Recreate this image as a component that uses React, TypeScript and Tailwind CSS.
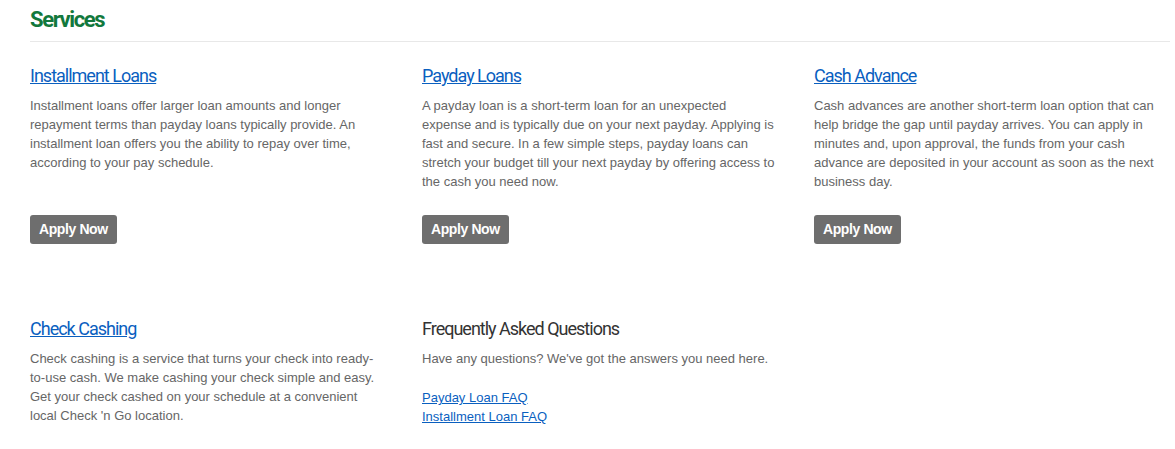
const headFont = { fontFamily: 'Roboto, "DejaVu Sans", sans-serif' };

type Service = { title: string; text: string };

const services: Service[] = [
  {
    title: 'Installment Loans',
    text: 'Installment loans offer larger loan amounts and longer repayment terms than payday loans typically provide. An installment loan offers you the ability to repay over time, according to your pay schedule.',
  },
  {
    title: 'Payday Loans',
    text: 'A payday loan is a short-term loan for an unexpected expense and is typically due on your next payday. Applying is fast and secure. In a few simple steps, payday loans can stretch your budget till your next payday by offering access to the cash you need now.',
  },
  {
    title: 'Cash Advance',
    text: 'Cash advances are another short-term loan option that can help bridge the gap until payday arrives. You can apply in minutes and, upon approval, the funds from your cash advance are deposited in your account as soon as the next business day.',
  },
];

function ServiceCard({ s }: { s: Service }) {
  return (
    <div className="flex flex-col">
      <a href="#" className="self-start text-[18px] leading-[22px] tracking-[-1px] text-[#0a5fbf] underline" style={headFont}>
        {s.title}
      </a>
      <p className="mt-[9px] h-[95px] max-w-[353px] text-[13px] leading-[19px] text-[#666]">{s.text}</p>
      <div className="mt-[24px]">
        <button className="h-[29px] rounded-[3px] bg-[#6e6e6e] px-[9px] text-[14px] font-bold tracking-[-0.4px] text-white">
          Apply Now
        </button>
      </div>
    </div>
  );
}

export default function App() {
  return (
    <div className="min-h-[449px] bg-white pl-[30px] pr-[5px]" style={{ fontFamily: '"Liberation Sans", Arial, sans-serif' }}>
      <h2 className="pt-[7px] pb-[8px] text-[22px] leading-[26px] font-bold tracking-[-1.4px] text-[#12783c]" style={headFont}>
        Services
      </h2>
      <div className="border-t border-[#e8e8e8]" />
      <div className="grid grid-cols-[392px_392px_1fr] pt-[23px]">
        {services.map((s) => (
          <ServiceCard key={s.title} s={s} />
        ))}
      </div>
      <div className="grid grid-cols-[392px_392px_1fr] pt-[74px]">
        <div className="flex flex-col">
          <a href="#" className="self-start text-[18px] leading-[22px] tracking-[-1px] text-[#0a5fbf] underline" style={headFont}>
            Check Cashing
          </a>
          <p className="mt-[9px] max-w-[353px] text-[13px] leading-[19px] text-[#666]">
            Check cashing is a service that turns your check into ready-to-use cash. We make cashing your check simple and easy. Get your check cashed on your schedule at a convenient local Check 'n Go location.
          </p>
        </div>
        <div className="flex flex-col">
          <h3 className="text-[18px] leading-[22px] tracking-[-1px] text-[#333]" style={headFont}>
            Frequently Asked Questions
          </h3>
          <p className="mt-[9px] text-[13px] leading-[19px] text-[#666]">
            Have any questions? We've got the answers you need here.
          </p>
          <a href="#" className="mt-[20px] text-[13px] leading-[19px] text-[#0a5fbf] underline self-start">
            Payday Loan FAQ
          </a>
          <a href="#" className="text-[13px] leading-[19px] text-[#0a5fbf] underline self-start">
            Installment Loan FAQ
          </a>
        </div>
        <div />
      </div>
    </div>
  );
}
